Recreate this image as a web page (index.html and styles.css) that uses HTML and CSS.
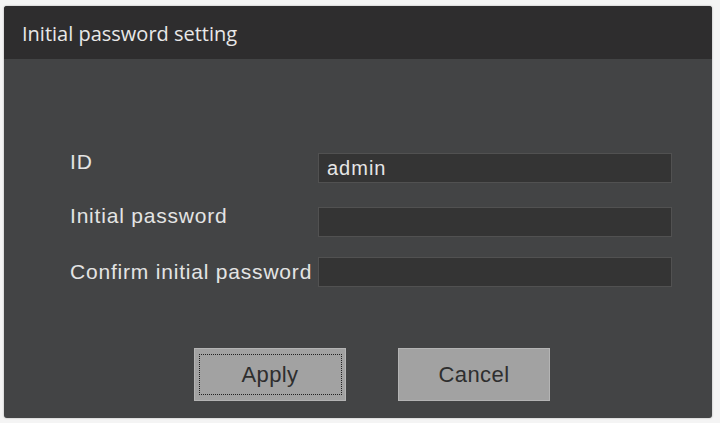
FILE: index.html
```html
<!DOCTYPE html>
<html>
<head>
<meta charset="utf-8">
<link rel="stylesheet" href="styles.css">
</head>
<body>
<div class="dialog">
  <div class="titlebar">Initial password setting</div>
  <div class="content">
    <div class="form">
      <div class="row row-id">
        <span class="label">ID</span>
        <div class="field">admin</div>
      </div>
      <div class="row row-pw">
        <span class="label">Initial password</span>
        <div class="field"></div>
      </div>
      <div class="row row-confirm">
        <span class="label">Confirm initial password</span>
        <div class="field"></div>
      </div>
    </div>
    <div class="buttons">
      <button class="btn btn-focus"><span>Apply</span></button>
      <button class="btn">Cancel</button>
    </div>
  </div>
</div>
</body>
</html>
```

FILE: styles.css
```css
html, body {
  margin: 0;
  padding: 0;
}
body {
  background: #f4f4f4;
  width: 720px;
  height: 423px;
  overflow: hidden;
  padding-top: 6px;
  padding-left: 4px;
  box-sizing: border-box;
}
.dialog {
  width: 708px;
  height: 412px;
  background: #434445;
  border-radius: 3px;
  box-shadow: 0 0 2px rgba(0,0,0,0.35);
  overflow: hidden;
  display: flex;
  flex-direction: column;
}
.titlebar {
  height: 53px;
  background: #2e2d2e;
  color: #e8e8e8;
  font-family: "Open Sans", "Liberation Sans", sans-serif;
  font-size: 20px;
  line-height: 55px;
  padding-left: 18px;
  flex: none;
}
.content {
  flex: 1;
  padding-top: 94px;
  display: flex;
  flex-direction: column;
}
.form {
  display: flex;
  flex-direction: column;
  padding-left: 66px;
}
.row {
  display: flex;
  align-items: center;
  height: 30px;
}
.row-pw { margin-top: 24px; }
.row-confirm { margin-top: 20px; }
.label {
  width: 248px;
  color: #e4e4e4;
  font-family: "Liberation Sans", Arial, sans-serif;
  font-size: 21px;
  letter-spacing: 0.8px;
  white-space: nowrap;
  position: relative;
  top: -6px;
}
.row-confirm .label { top: 0; }
.field {
  width: 354px;
  height: 30px;
  box-sizing: border-box;
  background: #343434;
  border: 1px solid #515151;
  color: #e6e6e6;
  font-family: "Liberation Sans", Arial, sans-serif;
  font-size: 20px;
  letter-spacing: 1px;
  line-height: 28px;
  padding-left: 8px;
}
.buttons {
  display: flex;
  gap: 52px;
  padding-left: 190px;
  margin-top: 61px;
}
.btn {
  width: 152px;
  height: 53px;
  background: #a2a2a2;
  border: 1px solid #b4b4b4;
  color: #2e2e2e;
  font-family: "Liberation Sans", Arial, sans-serif;
  font-size: 22px;
  letter-spacing: 0.4px;
  padding: 0;
  margin: 0;
  position: relative;
}
.btn-focus::after {
  content: "";
  position: absolute;
  left: 4px;
  top: 5px;
  right: 3px;
  bottom: 5px;
  border: 1px dotted #222;
}
```
